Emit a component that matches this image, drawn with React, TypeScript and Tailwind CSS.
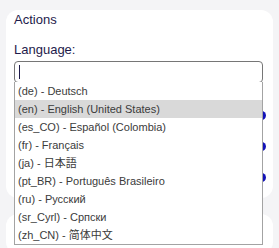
import React from "react";

const languages = [
  { code: "de", name: "Deutsch" },
  { code: "en", name: "English (United States)" },
  { code: "es_CO", name: "Español (Colombia)" },
  { code: "fr", name: "Français" },
  { code: "ja", name: "日本語" },
  { code: "pt_BR", name: "Português Brasileiro" },
  { code: "ru", name: "Русский" },
  { code: "sr_Cyrl", name: "Српски" },
  { code: "zh_CN", name: "简体中文" },
];

export default function App() {
  const selected = "en";

  return (
    <div
      className="h-[248px] bg-[#f4f4f6] pt-[10px] px-[6px] overflow-hidden"
      style={{ fontFamily: "'Liberation Sans', Arial, 'Noto Sans CJK JP', sans-serif" }}
    >
      {/* settings card */}
      <div className="relative bg-white rounded-xl h-[188px] pl-[8px] pr-[10px] pt-[2px]">
        <div className="text-[13px] leading-4 text-[#1e1b4b]">Actions</div>
        <div className="mt-[14px] text-[13px] leading-4 text-[#1e1b4b]">Language:</div>

        <div className="relative mt-[3px]">
          <div className="h-[22px] rounded-[4px] border border-[#767676] bg-white flex items-center pl-[4px]">
            <span className="w-px h-[14px] bg-[#1e1b4b]" />
          </div>

          {/* open language list */}
          <ul className="absolute left-0 right-0 top-[21px] z-10 bg-white border border-[#a3a3a3] border-t-0">
            {languages.map((l) => (
              <li
                key={l.code}
                className={
                  "h-[18px] pl-[3px] flex items-center text-[11px] text-[#3b3b3b] whitespace-nowrap " +
                  (l.code === selected ? "bg-[#d9d9d9]" : "")
                }
              >
                ({l.code}) - {l.name}
              </li>
            ))}
          </ul>
        </div>

        {/* rows hidden under the list */}
        <div className="mt-[28px] flex flex-col gap-[22px] -mr-[3px]">
          {[0, 1, 2].map((i) => (
            <div key={i} className="flex justify-end">
              <span className="w-[24px] h-[9px] rounded-full bg-[#1212b8]" />
            </div>
          ))}
        </div>
      </div>

      <div className="mt-[16px] bg-white rounded-xl h-[40px]" />
    </div>
  );
}
